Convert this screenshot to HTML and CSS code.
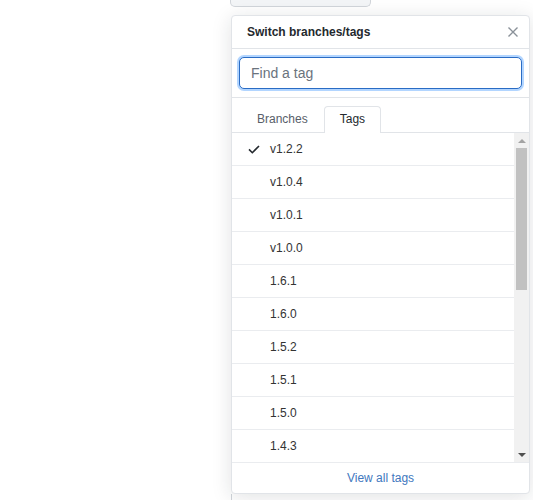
FILE: index.html
```html
<!DOCTYPE html>
<html lang="en">
<head>
<meta charset="utf-8">
<title>Switch branches/tags</title>
<link rel="stylesheet" href="styles.css">
</head>
<body>
<div class="page">
  <div class="branch-btn"></div>
  <div class="backdrop"></div>
</div>

<div class="menu">
  <div class="menu-header">
    <span class="menu-title">Switch branches/tags</span>
    <svg class="close" width="12" height="12" viewBox="0 0 12 12" aria-hidden="true">
      <path d="M1.5 1.5L10.5 10.5M10.5 1.5L1.5 10.5" stroke="#8a9199" stroke-width="1.4" fill="none"/>
    </svg>
  </div>
  <div class="menu-filter">
    <input class="filter-input" type="text" placeholder="Find a tag" autofocus>
  </div>
  <div class="menu-tabs">
    <span class="tab">Branches</span>
    <span class="tab selected">Tags</span>
  </div>
  <div class="menu-body">
    <div class="menu-list">
      <div class="item">
        <svg class="check" width="12" height="12" viewBox="0 0 12 12" aria-hidden="true"><path d="M1 6.4L4.3 9.7 11 3" stroke="#24292e" stroke-width="1.6" fill="none"/></svg>
        <span>v1.2.2</span>
      </div>
      <div class="item"><span class="nocheck"></span><span>v1.0.4</span></div>
      <div class="item"><span class="nocheck"></span><span>v1.0.1</span></div>
      <div class="item"><span class="nocheck"></span><span>v1.0.0</span></div>
      <div class="item"><span class="nocheck"></span><span>1.6.1</span></div>
      <div class="item"><span class="nocheck"></span><span>1.6.0</span></div>
      <div class="item"><span class="nocheck"></span><span>1.5.2</span></div>
      <div class="item"><span class="nocheck"></span><span>1.5.1</span></div>
      <div class="item"><span class="nocheck"></span><span>1.5.0</span></div>
      <div class="item"><span class="nocheck"></span><span>1.4.3</span></div>
    </div>
    <div class="scrollbar" aria-hidden="true">
      <div class="sb-btn"><span class="arrow-up"></span></div>
      <div class="sb-track"><div class="sb-thumb"></div></div>
      <div class="sb-btn"><span class="arrow-down"></span></div>
    </div>
  </div>
  <div class="menu-footer">
    <a class="footer-link" href="#">View all tags</a>
  </div>
</div>
</body>
</html>
```

FILE: styles.css
```css
html, body {
  margin: 0;
  padding: 0;
  background: #ffffff;
  font-family: "Liberation Sans", Arial, sans-serif;
  color: #24292e;
}

.page {
  width: 533px;
  height: 500px;
  overflow: hidden;
}

.branch-btn {
  margin-left: 230px;
  width: 139px;
  height: 6px;
  background: #f3f5f7;
  border: 1px solid #d1d5da;
  border-top: none;
  border-radius: 0 0 5px 5px;
}

.backdrop {
  margin: 487px 0 0 231px;
  height: 20px;
  border-left: 1px solid #d1d5da;
}

.menu {
  position: absolute;
  left: 231px;
  top: 15px;
  width: 297px;
  background: #fff;
  border: 1px solid #e1e4e8;
  border-radius: 4px;
  box-shadow: 0 3px 20px rgba(27, 31, 35, 0.13);
  overflow: hidden;
}

.menu-header {
  display: flex;
  align-items: center;
  justify-content: space-between;
  height: 32px;
  padding: 0 10px 0 15px;
  border-bottom: 1px solid #e1e4e8;
}

.menu-title {
  font-size: 12px;
  font-weight: bold;
  line-height: 16px;
}

.close {
  display: block;
}

.menu-filter {
  padding: 8px 7px;
  border-bottom: 1px solid #e1e4e8;
}

.filter-input {
  box-sizing: border-box;
  display: block;
  width: 100%;
  height: 32px;
  padding: 0 11px;
  font-family: "Liberation Sans", Arial, sans-serif;
  font-size: 14px;
  color: #24292e;
  border: 1px solid #2a6cc4;
  border-radius: 5px;
  box-shadow: 0 0 0 2px rgba(33, 136, 255, 0.35);
  outline: none;
  background: #fff;
}

.filter-input::placeholder {
  color: #6a737d;
}

.menu-tabs {
  display: flex;
  padding: 8px 9px 0;
  border-bottom: 1px solid #e1e4e8;
}

.tab {
  font-size: 12px;
  line-height: 16px;
  padding: 4px 15px 5px;
  border: 1px solid transparent;
  border-bottom: none;
  border-radius: 4px 4px 0 0;
  color: #586069;
}

.tab.selected {
  color: #24292e;
  background: #fff;
  border-color: #e1e4e8;
  margin-bottom: -1px;
  padding-bottom: 6px;
}

.menu-body {
  display: flex;
  height: 329px;
}

.menu-list {
  flex: 1;
  overflow: hidden;
}

.item {
  display: flex;
  align-items: center;
  gap: 10px;
  height: 32px;
  padding-left: 16px;
  border-bottom: 1px solid #eaecef;
  font-size: 12px;
  line-height: 16px;
  color: #333;
}

.check,
.nocheck {
  display: block;
  width: 12px;
  height: 12px;
  flex: none;
}

.scrollbar {
  width: 15px;
  flex: none;
  display: flex;
  flex-direction: column;
  background: #f1f1f1;
}

.sb-btn {
  height: 15px;
  display: flex;
  align-items: center;
  justify-content: center;
  flex: none;
}

.arrow-up {
  width: 0;
  height: 0;
  border-left: 4px solid transparent;
  border-right: 4px solid transparent;
  border-bottom: 4px solid #a3a3a3;
}

.arrow-down {
  width: 0;
  height: 0;
  border-left: 4px solid transparent;
  border-right: 4px solid transparent;
  border-top: 4px solid #505050;
}

.sb-track {
  flex: 1;
}

.sb-thumb {
  height: 142px;
  margin: 0 2px 0 2px;
  background: #c1c1c1;
}

.menu-footer {
  height: 30px;
  display: flex;
  align-items: center;
  justify-content: center;
  border-top: 1px solid #eaecef;
}

.footer-link {
  font-size: 12px;
  color: #4178be;
  text-decoration: none;
}
```
